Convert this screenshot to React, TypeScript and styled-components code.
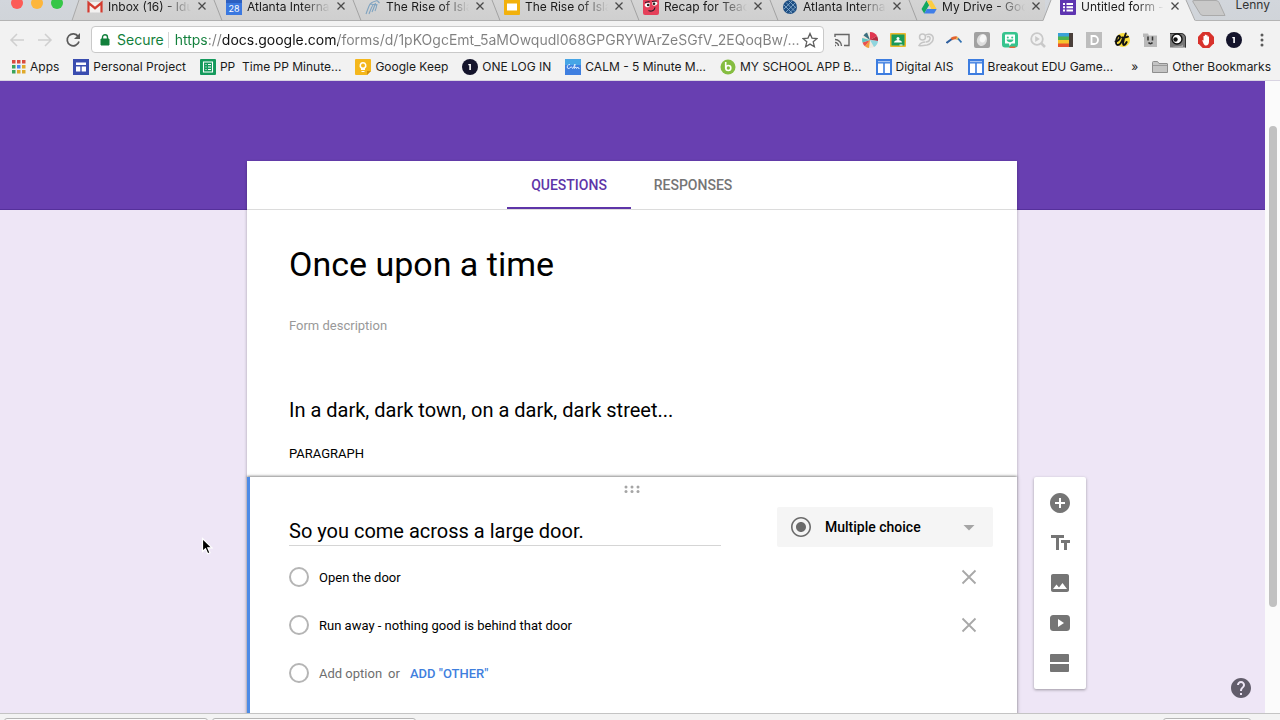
import React, { ReactNode } from "react";
import styled, { createGlobalStyle } from "styled-components";

const GlobalStyle = createGlobalStyle`
  *, *::before, *::after { box-sizing: border-box; }
  body { margin: 0; }
  button, input, select { font: inherit; color: inherit; border: 0; margin: 0; padding: 0; background: none; outline: none; }
  svg { display: block; flex: none; }
`;

const uiFont = `Inter, "Liberation Sans", sans-serif`;
const formFont = `Roboto, "Liberation Sans", sans-serif`;

const Window = styled.div`
  position: relative;
  display: flex;
  flex-direction: column;
  height: 100vh;
  overflow: hidden;
  background: #f2f2f2;
  font-family: ${uiFont};
  font-size: 12px;
  color: #1a1a1a;
`;

/* Tab strip */
const TabStrip = styled.header`
  display: flex;
  align-items: stretch;
  flex: none;
  height: 21px;
  overflow: hidden;
  background: linear-gradient(#d2d6dc, #d0d4d9);
  box-shadow: inset 0 -1px #b4b4b4;
`;
const Lights = styled.div`
  flex: none;
  width: 72px;
`;
const TabList = styled.nav`
  display: flex;
  flex: 0 1 1112px;
  min-width: 0;
`;
const TabItem = styled.div<{ $active?: boolean }>`
  display: flex;
  flex: 1 1 0;
  min-width: 0;
  background: ${(p) => (p.$active ? "none" : "linear-gradient(#d4d4d4, #cfcfcf 20px, #b0b0b0 20px)")};
`;
const TabBody = styled.div<{ $active?: boolean }>`
  display: flex;
  flex: 1;
  min-width: 0;
  padding: 0 3px;
  gap: 5px;
  background: ${(p) => (p.$active ? "#f2f2f2" : "none")};
`;
const TabTitle = styled.a`
  flex: 1;
  min-width: 0;
  overflow: hidden;
  white-space: nowrap;
  line-height: 14px;
  color: inherit;
  text-decoration: none;
  mask-image: linear-gradient(90deg, #000 calc(100% - 28px), transparent);
`;
const IconButton = styled.button<{ $size?: number }>`
  display: flex;
  align-items: center;
  justify-content: center;
  flex: none;
  width: ${(p) => p.$size ?? 16}px;
  height: ${(p) => p.$size ?? 16}px;
  cursor: pointer;
`;
const Profile = styled.button`
  align-self: flex-start;
  margin-left: auto;
  padding-right: 10px;
  line-height: 10px;
  font-size: 12px;
  color: #333;
`;

/* Address toolbar */
const Toolbar = styled.div`
  display: flex;
  align-items: center;
  flex: none;
  height: 32px;
  padding: 5px 10px 0 9px;
`;
const NavButtons = styled.div`
  display: flex;
  gap: 12px;
  margin-right: 10px;
`;
const Omnibox = styled.div`
  display: flex;
  align-items: center;
  flex: 1;
  min-width: 0;
  height: 27px;
  padding: 0 5px 0 8px;
  border: 1px solid #c9c9c9;
  border-radius: 4px;
  background: #fff;
  font-size: 14px;
`;
const Secure = styled.span`
  margin: 0 6px 0 7px;
  padding-right: 4px;
  border-right: 1px solid #d5d5d5;
  line-height: 16px;
  color: #12803c;
`;
const Address = styled.input`
  flex: 1;
  min-width: 0;
  height: 20px;
  text-overflow: ellipsis;
  color: #808080;
  background: linear-gradient(90deg, #12803c 34px, #808080 34px 47px, #111 47px 163px, #808080 163px);
  background-clip: text;
  -webkit-text-fill-color: transparent;
`;
const Extensions = styled.div`
  display: flex;
  gap: 12px;
  margin-left: 10px;
`;

/* Bookmarks */
const Bookmarks = styled.nav`
  display: flex;
  align-items: center;
  flex: none;
  height: 28px;
  padding: 0 9px 0 10px;
  gap: 14px;
  overflow: hidden;
  border-bottom: 1px solid #d9d4e2;
`;
const Bookmark = styled.a<{ $end?: boolean }>`
  display: flex;
  align-items: center;
  flex: none;
  gap: 4px;
  margin-left: ${(p) => (p.$end ? "auto" : "0")};
  line-height: 16px;
  white-space: pre;
  color: inherit;
  text-decoration: none;
`;

/* Page */
const Viewport = styled.div`
  position: relative;
  display: flex;
  flex: 1;
  min-height: 0;
  overflow: hidden;
`;
const Page = styled.main`
  display: grid;
  grid-template-columns: minmax(0, 1fr) minmax(0, 770px) minmax(52px, 1fr);
  flex: 1;
  align-items: start;
  min-width: 0;
  padding: 80px 1px 0 0;
  background: linear-gradient(#683fb1 128px, #55309a 128px 129px, #eee6f6 129px);
  font-family: ${formFont};
  font-size: 13px;
  color: #000;
`;
const ScrollTrack = styled.div`
  flex: none;
  width: 15px;
  padding: 45px 3px 0 4px;
  background: #fbfbfb;
`;
const ScrollThumb = styled.div`
  height: 82%;
  border-radius: 4px;
  background: #c1c1c1;
`;
const FormColumn = styled.div`
  grid-column: 2;
`;
const Sheet = styled.section`
  background: #fff;
  box-shadow: 0 1px 3px rgba(0, 0, 0, 0.3);
`;
const FormTabs = styled.div`
  display: flex;
  justify-content: center;
  height: 49px;
  padding-right: 2px;
  border-bottom: 1px solid #dcdcdc;
`;
const FormTab = styled.button<{ $active?: boolean }>`
  width: 124px;
  border-bottom: 2px solid ${(p) => (p.$active ? "#5e35a8" : "transparent")};
  padding-top: 2px;
  font-size: 14px;
  font-weight: 500;
  color: ${(p) => (p.$active ? "#5e35a8" : "#757575")};
`;
const Fields = styled.div`
  display: flex;
  flex-direction: column;
  padding: 34px 42px 15px;
`;
const TitleInput = styled.input`
  height: 40px;
  font-size: 34px;
  line-height: 40px;
`;
const DescriptionInput = styled.input`
  height: 16px;
  margin: 33px 0 65px;
  &::placeholder { color: #999; opacity: 1; }
`;
const QuestionInput = styled.input<{ $underline?: boolean }>`
  flex: ${(p) => (p.$underline ? "0 1 432px" : "none")};
  min-width: 0;
  height: ${(p) => (p.$underline ? "30px" : "24px")};
  margin-bottom: ${(p) => (p.$underline ? "1px" : "0")};
  border-bottom: ${(p) => (p.$underline ? "1px solid #d5d5d5" : "0")};
  font-size: 20px;
`;
const TypeLabel = styled.p`
  margin: 24px 0 0;
  line-height: 16px;
`;
const QuestionCard = styled.section`
  position: relative;
  min-height: 300px;
  padding: 0 24px 0 39px;
  border-left: 3px solid #4d8be6;
  background: #fff;
  box-shadow: 0 -1px 2px rgba(0, 0, 0, 0.3), 0 0 4px rgba(0, 0, 0, 0.3);
`;
const DragHandle = styled.div`
  display: flex;
  justify-content: center;
  height: 30px;
  padding: 8px 18px 0 0;
`;
const QuestionHead = styled.div`
  display: flex;
  justify-content: space-between;
  align-items: flex-end;
  height: 40px;
  margin-bottom: 6px;
`;
const TypeSelect = styled.label`
  display: flex;
  align-items: center;
  flex: 0 0 216px;
  height: 40px;
  padding: 0 12px;
  border-radius: 2px;
  background: #f5f5f5;
`;
const Select = styled.select`
  flex: 1;
  height: 40px;
  margin-left: 12px;
  appearance: none;
  font-size: 14px;
  font-weight: 500;
`;
const Option = styled.div`
  display: flex;
  align-items: center;
  height: 48px;
  padding-right: 12px;
`;
const Radio = styled.input`
  appearance: none;
  flex: none;
  width: 20px;
  height: 20px;
  margin-right: 10px;
  border: 2px solid #b5b5b5;
  border-radius: 50%;
`;
const OptionInput = styled.input`
  flex: 1;
  min-width: 0;
  height: 20px;
`;
const AddButton = styled.button<{ $accent?: boolean }>`
  margin-right: ${(p) => (p.$accent ? "0" : "6px")};
  margin-left: ${(p) => (p.$accent ? "10px" : "0")};
  font-weight: ${(p) => (p.$accent ? "500" : "400")};
  color: ${(p) => (p.$accent ? "#3f7fde" : "#6e6e6e")};
`;
const Or = styled.span`
  color: #6e6e6e;
`;
const SideTools = styled.aside`
  display: flex;
  flex-direction: column;
  gap: 16px;
  width: 52px;
  margin: 316px 0 0 17px;
  padding: 14px;
  border-radius: 2px;
  background: #fff;
  box-shadow: 0 1px 3px rgba(0, 0, 0, 0.35);
`;
const Help = styled.button`
  position: absolute;
  right: 27px;
  bottom: 13px;
`;
const Pointer = styled.svg`
  position: absolute;
  left: 201px;
  top: 537px;
`;
const Shelf = styled.footer`
  display: flex;
  flex: none;
  gap: 4px;
  height: 7px;
  padding: 4px 29px 0 4px;
  overflow: hidden;
  border-top: 1px solid #c4c4c4;
  background: #f3f3f3;
`;
const ShelfItem = styled.div<{ $end?: boolean }>`
  flex: 0 1 ${(p) => (p.$end ? "88px" : "204px")};
  height: 22px;
  margin-left: ${(p) => (p.$end ? "auto" : "0")};
  border: 1px solid #b5b5b5;
  border-radius: 3px;
  background: #fcfcfc;
`;

const Cross = ({ size, box, color, width }: { size: number; box: number; color: string; width: number }) => {
  const a = (box - size) / 2;
  const b = box - a;
  return (
    <svg width={box} height={box} viewBox={`0 0 ${box} ${box}`} stroke={color} strokeWidth={width}>
      <path d={`M${a} ${a}L${b} ${b}M${b} ${a}L${a} ${b}`} />
    </svg>
  );
};

const Icon16 = ({ children }: { children: ReactNode }) => (
  <svg width="16" height="16" viewBox="0 0 16 16" fill="none">{children}</svg>
);

const OneIcon = () => (
  <Icon16>
    <circle cx="8" cy="8" r="8" fill="#14142b" />
    <path d="M6.300 5h2.600v6H7.300V6.300h-1z" fill="#fff" />
  </Icon16>
);

const TabIcon = ({ children }: { children: ReactNode }) => (
  <svg width="16" height="15" viewBox="0 1 16 15" fill="none">{children}</svg>
);

const tabs: { title: string; icon: ReactNode }[] = [
  {
    title: "Inbox (16) - Idu",
    icon: (
      <TabIcon>
        <path d="M1 3h14v10.500H1z" fill="#f3f1f0" />
        <path d="M1.500 13.500V3.800L8 9.200l6.500-5.400v9.700" stroke="#d33b2f" strokeWidth="2.200" />
      </TabIcon>
    ),
  },
  {
    title: "Atlanta Interna",
    icon: (
      <TabIcon>
        <path d="M0 0h16v16H0z" fill="#3b78e0" />
        <path d="M0 0h16v4H0z" fill="#2c5fc0" />
        <text x="8" y="12.500" fontSize="9" fontFamily="Inter" fill="#fff" textAnchor="middle">28</text>
      </TabIcon>
    ),
  },
  {
    title: "The Rise of Isla",
    icon: (
      <TabIcon>
        <path d="M1 15C2.500 11 3.500 8 4.500 6c1-3 4-3.500 8-4.500M4 15c1.500-4 2.500-7 4-9M7 13c1.500-3 2.500-6 3.500-9M10 12c1-2 1.500-4 2-7M5 5l7 1M12.500 2l2 2" stroke="#7fa3c0" strokeWidth="1.100" />
      </TabIcon>
    ),
  },
  {
    title: "The Rise of Isla",
    icon: (
      <TabIcon>
        <rect width="16" height="16" rx="1" fill="#f2b10c" />
        <path d="M3 4.500h10v7H3z" fill="#fff" />
      </TabIcon>
    ),
  },
  {
    title: "Recap for Teac",
    icon: (
      <TabIcon>
        <rect width="16" height="16" rx="2" fill="#e5405a" />
        <path d="M1.500 6c1.500-2.500 4-3 5.500-1.500L6.500 7.500c-1.500 1.500-4 1-5-1.500zM9 4c1.500-2 4-2 5.500 0-.5 2.500-3.500 3.500-5 2z" fill="#fff" />
        <path d="M2 3.500l4.500-1M9 2.500L13.500 2M5.500 11.500c3 1.500 6 0 6.500-3" stroke="#2b1d2b" strokeWidth="1.200" />
        <circle cx="5.200" cy="6" r="1.300" fill="#222" />
        <circle cx="11" cy="4.800" r="1.300" fill="#222" />
      </TabIcon>
    ),
  },
  {
    title: "Atlanta Interna",
    icon: (
      <TabIcon>
        <circle cx="8" cy="8" r="7" fill="#1d4e83" />
        <path d="M2 6l8 8M4 3.500l9 9M7 2l7 7M2 10l8-8M4 13l9-9M7 14.500l7-7" stroke="#8bb0d0" strokeWidth="0.800" />
      </TabIcon>
    ),
  },
  {
    title: "My Drive - Goo",
    icon: (
      <TabIcon>
        <path d="M5.500 1.500L0.500 10l2.700 4.500L8.200 6z" fill="#11a861" />
        <path d="M5.500 1.500h5.200L15.700 10h-5.300z" fill="#fccd42" />
        <path d="M3.200 14.500L5.900 10h9.800l-2.600 4.500z" fill="#3f7ee8" />
      </TabIcon>
    ),
  },
  {
    title: "Untitled form -",
    icon: (
      <TabIcon>
        <rect width="16" height="16" rx="1" fill="#5e35b1" />
        <path d="M3 4h2v2H3zM6.500 4H13v2H6.500zM3 7.300h2v2H3zM6.500 7.300H13v2H6.500zM3 10.600h2v2H3zM6.500 10.600H13v2H6.500z" fill="#fff" />
      </TabIcon>
    ),
  },
];

const TabEdge = ({ kind }: { kind: "first" | "between" | "active" }) => (
  <svg width="12" height="21" viewBox="0 0 12 21" fill="none" overflow="visible" strokeWidth="1">
    {kind === "first" && (
      <>
        <path d="M0 0h7L0 20z" fill="#d2d6db" />
        <path d="M7 0L0 20.500" stroke="#a9a9a9" />
      </>
    )}
    {kind === "between" && <path d="M3 0l8 20.500" stroke="#a2a2a2" />}
    {kind === "active" && (
      <>
        <path d="M6 0h6.500v21H-2z" fill="#f2f2f2" />
        <path d="M6 0l-8 20.500" stroke="#a9a9a9" />
      </>
    )}
  </svg>
);

const EtIcon = () => (
  <Icon16>
    <circle cx="9" cy="8" r="7" fill="#f8dc3c" />
    <path d="M1.500 9.500c3-.5 5-3 4.500-5C5.500 3 3.500 4 2.500 7c-1 3.500-.5 6 1.200 6 2 0 4-3 4.800-5.500M11.800 1.500C10 6 8 13 9.700 13c1.300 0 2.300-1.500 3-3M8 5.500c2 .3 4 0 6-.8" stroke="#111" strokeWidth="1.900" strokeLinecap="round" />
  </Icon16>
);

const extensions: { name: string; icon: ReactNode }[] = [
  {
    name: "Cast",
    icon: (
      <Icon16>
        <path d="M1 5V2.500h14v11h-5M1 13.500h1M1 10.500a3.500 3.500 0 0 1 3.500 3.500M1 7.500A6.500 6.500 0 0 1 7.500 14" stroke="#666" strokeWidth="1.400" />
      </Icon16>
    ),
  },
  {
    name: "Color wheel",
    icon: (
      <Icon16>
        <circle cx="8" cy="8" r="8" fill="#efe8df" />
        <path d="M8 8V0a8 8 0 0 1 7 4z" fill="#e0354f" />
        <path d="M8 8l7-4a8 8 0 0 1 1 5z" fill="#b52a40" />
        <path d="M8 8l8 1a8 8 0 0 1-4 6z" fill="#8fd5de" />
        <path d="M8 8l-1 8a8 8 0 0 1-4-1.800z" fill="#f2a03c" />
        <path d="M8 8l-5 6.200A8 8 0 0 1 .5 10.500z" fill="#e8524f" />
        <path d="M8 8L.5 10.500A8 8 0 0 1 .3 6z" fill="#5fc4c1" />
        <path d="M8 8L1.500 3.500A8 8 0 0 1 5 .6z" fill="#3a6f80" />
      </Icon16>
    ),
  },
  {
    name: "Classroom",
    icon: (
      <Icon16>
        <rect y="1" width="16" height="14" rx="1" fill="#e9b92c" />
        <path d="M1.500 2.500h13v11h-13z" fill="#199a5a" />
        <circle cx="8" cy="6.500" r="1.500" fill="#fff" />
        <path d="M4 10.500c0-3.500 8-3.500 8 0zM9.500 12.500h3v1h-3z" fill="#fff" />
      </Icon16>
    ),
  },
  {
    name: "Sketch",
    icon: (
      <Icon16>
        <circle cx="4.500" cy="5" r="3" stroke="#c6c6c6" strokeWidth="1.500" />
        <path d="M7 3.500c2-2 7-2 8 1.500s-2 7-6 8c-3 .5-6 1-8 .5 1-2 4-3.500 6.500-3.500M9 5c2-1 3.500 0 3 2s-2.500 3-4 3" stroke="#c6c6c6" strokeWidth="1.500" />
      </Icon16>
    ),
  },
  {
    name: "Boomerang",
    icon: (
      <Icon16>
        <path d="M.5 11C2.500 9.500 4.500 8 6.500 6.500" stroke="#2f5f9e" strokeWidth="2" />
        <path d="M5.500 7.200C7 6 8.500 5.500 11 6" stroke="#e2632d" strokeWidth="3" />
        <path d="M10.500 5.800l2 1.200" stroke="#e9c05a" strokeWidth="2.600" />
        <path d="M12 6.500l3.500 4" stroke="#2f6fb0" strokeWidth="1.800" />
      </Icon16>
    ),
  },
  {
    name: "Egg",
    icon: (
      <Icon16>
        <rect width="16" height="16" rx="2" fill="#a1a1a1" />
        <ellipse cx="8" cy="8" rx="5" ry="6" fill="#dedede" transform="rotate(20 8 8)" />
        <ellipse cx="9" cy="6.500" rx="3" ry="4" fill="#f7f7f7" transform="rotate(20 9 6)" />
      </Icon16>
    ),
  },
  {
    name: "Bitmoji",
    icon: (
      <Icon16>
        <rect width="16" height="15.500" rx="3" fill="#36c48e" />
        <path d="M8 14.500h6.500l-2 1.500H7z" fill="#e8663a" />
        <path d="M3.500 2.500h9q.5 0 .5.500v8q0 .5-.5.500H9.500l-2 2.500-.5-2.500H3.500q-.5 0-.5-.5V3q0-.5.500-.5z" fill="#fff" />
        <circle cx="5.800" cy="5.500" r="1" fill="#36c48e" />
        <circle cx="10.200" cy="5.500" r="1" fill="#36c48e" />
        <path d="M4.500 7.500h7c-.5 3.500-6.500 3.500-7 0z" fill="#36c48e" />
      </Icon16>
    ),
  },
  {
    name: "Search",
    icon: (
      <Icon16>
        <circle cx="7" cy="7" r="5.800" stroke="#c9c9c9" strokeWidth="1.800" />
        <path d="M5.200 4l4.600 3-4.600 3z" fill="#c9c9c9" />
        <path d="M11 11l4 4" stroke="#c9c9c9" strokeWidth="2.500" />
      </Icon16>
    ),
  },
  {
    name: "Color stack",
    icon: (
      <Icon16>
        <path d="M0 1h12v4H0z" fill="#3aa2d8" />
        <path d="M0 4.500h12v4H0z" fill="#4db34f" />
        <path d="M0 8h12v4H0z" fill="#f5c42c" />
        <path d="M0 11.500h12V15H0z" fill="#e8542e" />
        <path d="M11 1h4v14h-4z" fill="#4a3f3a" />
      </Icon16>
    ),
  },
  {
    name: "Docs",
    icon: (
      <Icon16>
        <path d="M0 0h16v16H0z" fill="#bdbdbd" />
        <path d="M5.500 4H8a4 4 0 0 1 0 8H5.500z" stroke="#fff" strokeWidth="1.800" />
      </Icon16>
    ),
  },
  { name: "Type", icon: <EtIcon /> },
  {
    name: "Folder face",
    icon: (
      <Icon16>
        <path d="M1 1.500h5l1 2h8V15H2V5H1z" fill="#b9b9b9" />
        <path d="M6 4.500v4M10.500 4.500v4M6.500 10.500c1 1.500 3 1.500 4 0" stroke="#333" strokeWidth="1.500" />
      </Icon16>
    ),
  },
  {
    name: "Eye",
    icon: (
      <Icon16>
        <path d="M0 1h11a5 5 0 0 1 5 5v9.500H0z" fill="#777" />
        <path d="M0 1.500h11a4.500 4.500 0 0 1 4.500 4.500v9.500" stroke="#333" />
        <circle cx="7" cy="7" r="5" fill="#fff" stroke="#111" strokeWidth="1.400" />
        <circle cx="5.500" cy="7.500" r="2.200" fill="#111" />
        <path d="M2 15.500c2-2.500 8 0 11-3v3z" fill="#a5a5a5" />
      </Icon16>
    ),
  },
  {
    name: "AdBlock",
    icon: (
      <Icon16>
        <path d="M4.700 0h6.600L16 4.700v6.600L11.300 16H4.700L0 11.300V4.700z" fill="#d8322c" />
        <path d="M4.200 8l1.300.5V4h1.300v3.500V2.800h1.400v4.700V3.300h1.300V8V4.600H11v5.200C11 12 9.800 13.500 8 13.500S5.500 12 4.200 8z" fill="#fff" />
      </Icon16>
    ),
  },
  { name: "OneLogin", icon: <OneIcon /> },
  {
    name: "Menu",
    icon: (
      <Icon16>
        <circle cx="8" cy="3" r="1.500" fill="#5a5a5a" />
        <circle cx="8" cy="8" r="1.500" fill="#5a5a5a" />
        <circle cx="8" cy="13" r="1.500" fill="#5a5a5a" />
      </Icon16>
    ),
  },
];

const SiteIcon = () => (
  <Icon16>
    <path d="M0 0h16v16H0z" fill="#3d7de0" />
    <path d="M2 4.500h5.200V14H2zM8.800 4.500H14V14H8.800z" fill="#fff" />
    <path d="M2 2h12v1.200H2z" fill="#a9c6f4" />
  </Icon16>
);

const dotColors = ["#d94b3f", "#d94b3f", "#d94b3f", "#3ba45c", "#4285f4", "#e0a92b", "#3ba45c", "#e0a92b", "#e0a92b"];

const bookmarks: { title: string; icon: ReactNode }[] = [
  {
    title: "Apps",
    icon: (
      <Icon16>
        {dotColors.map((c, i) => (
          <rect key={i} x={2 + (i % 3) * 5} y={1 + Math.floor(i / 3) * 5} width="3.500" height="3.500" fill={c} />
        ))}
      </Icon16>
    ),
  },
  {
    title: "Personal Project",
    icon: (
      <Icon16>
        <path d="M0 0h16v16H0z" fill="#3a4db0" />
        <path d="M3 3.500h10V6H3zM3 7.500h4.300v5H3zM8.700 7.500H13v5H8.700z" fill="#fff" />
      </Icon16>
    ),
  },
  {
    title: "PP  Time PP Minute...",
    icon: (
      <Icon16>
        <rect width="16" height="16" rx="1" fill="#149a5c" />
        <path d="M3.500 3h9v10h-9zM5.500 5.500h1M8 5.500h3M5.500 8h1M8 8h3M5.500 10.500h1M8 10.500h3" stroke="#fff" strokeWidth="1.100" />
      </Icon16>
    ),
  },
  {
    title: "Google Keep",
    icon: (
      <Icon16>
        <path d="M1 0h14a1 1 0 0 1 1 1v11l-4 4H1a1 1 0 0 1-1-1V1a1 1 0 0 1 1-1z" fill="#f4b71c" />
        <path d="M12 16v-4h4z" fill="#d08d0c" />
        <path d="M8 3a3.500 3.500 0 0 0-2 6.400V11h4V9.400A3.500 3.500 0 0 0 8 3zM6.500 12h3v1h-3z" fill="#fff" />
        <circle cx="8" cy="6.500" r="2" fill="#f4b71c" />
      </Icon16>
    ),
  },
  { title: "ONE LOG IN", icon: <OneIcon /> },
  {
    title: "CALM - 5 Minute M...",
    icon: (
      <Icon16>
        <path d="M0 0h16v16H0z" fill="#3f7fe0" />
        <path d="M0 0h16v6H0z" fill="#46a5e6" />
        <path d="M5 5.500C2 5 1 10 4 9.500l2-1.500c1-1 1 2 2 1.500L10 5 9.500 9.500 11 8l.5 1.500L13 8l.5 1.500h1" stroke="#e5f1ff" strokeWidth="0.900" />
      </Icon16>
    ),
  },
  {
    title: "MY SCHOOL APP B...",
    icon: (
      <Icon16>
        <circle cx="8" cy="8" r="7.500" fill="#85bd41" />
        <circle cx="8.300" cy="9" r="2.500" stroke="#fff" strokeWidth="1.600" />
        <path d="M5.700 3v6.500" stroke="#fff" strokeWidth="1.600" />
      </Icon16>
    ),
  },
  { title: "Digital AIS", icon: <SiteIcon /> },
  { title: "Breakout EDU Game...", icon: <SiteIcon /> },
];

const Glyph = ({ d, color = "#757575" }: { d: string; color?: string }) => (
  <svg width="24" height="24" viewBox="0 0 24 24" fill={color}>
    <path d={d} />
  </svg>
);

const sideTools = [
  { name: "Add question", d: "M12 2C6.480 2 2 6.480 2 12s4.480 10 10 10 10-4.480 10-10S17.520 2 12 2zm5 11h-4v4h-2v-4H7v-2h4V7h2v4h4v2z" },
  { name: "Add title and description", d: "M3 4v3h5v12h3V7h5V4H3zm19 5h-9v3h3v7h3v-7h3V9z" },
  { name: "Add image", d: "M21 19V5c0-1.100-.9-2-2-2H5c-1.100 0-2 .9-2 2v14c0 1.100.9 2 2 2h14c1.100 0 2-.9 2-2zM5 18l3.500-4.500 2.500 3 3.500-4.500L19 18H5z" },
  { name: "Add video", d: "M6 4h12c3 0 4 1 4 4v8c0 3-1 4-4 4H6c-3 0-4-1-4-4V8c0-3 1-4 4-4zm4 4v8l6-4z" },
  { name: "Add section", d: "M3 3h17a1 1 0 0 1 1 1v7H2V4a1 1 0 0 1 1-1zM2 13h19v7a1 1 0 0 1-1 1H3a1 1 0 0 1-1-1z" },
];

const options = ["Open the door", "Run away - nothing good is behind that door"];

export default function App() {
  return (
    <Window>
      <GlobalStyle />
      <TabStrip>
        <Lights>
          <svg width="72" height="12" viewBox="0 0 72 12">
            <circle cx="17" cy="3" r="6" fill="#fc5b57" />
            <circle cx="37" cy="3" r="6" fill="#fdb63c" />
            <circle cx="57" cy="3" r="6" fill="#35c648" />
          </svg>
        </Lights>
        <TabList aria-label="Open tabs">
          {tabs.map((tab, i) => {
            const active = i === tabs.length - 1;
            return (
              <TabItem key={i} $active={active}>
                <TabEdge kind={active ? "active" : i === 0 ? "first" : "between"} />
                <TabBody $active={active}>
                  {tab.icon}
                  <TabTitle href="#">{tab.title}</TabTitle>
                  <IconButton $size={12} aria-label="Close tab">
                    <Cross size={7} box={12} color="#4a4a4a" width={1.300} />
                  </IconButton>
                </TabBody>
              </TabItem>
            );
          })}
        </TabList>
        <svg width="42" height="21" viewBox="0 0 42 21" role="img" aria-label="New tab">
          <path d="M-1 0h3l9.500 21H-1z" fill="#f2f2f2" />
          <path d="M2 0l9 20.500" stroke="#a9a9a9" fill="none" />
          <path d="M10 .5h22q2 0 3 2l6 13H19q-2 0-3-2L9 2q-1-1.500 1-1.500z" fill="#c9c9c9" stroke="#aaa" />
        </svg>
        <Profile>Lenny</Profile>
      </TabStrip>

      <Toolbar>
        <NavButtons>
          <IconButton aria-label="Back">
            <Icon16><path d="M15 8H2M8 2L2 8l6 6" stroke="#cfcfcf" strokeWidth="1.500" /></Icon16>
          </IconButton>
          <IconButton aria-label="Forward">
            <Icon16><path d="M1 8h13M8 2l6 6-6 6" stroke="#cfcfcf" strokeWidth="1.500" /></Icon16>
          </IconButton>
          <IconButton aria-label="Reload">
            <Icon16>
              <path d="M13.200 4.500A6 6 0 1 0 14 9.500" stroke="#5a5a5a" strokeWidth="1.700" />
              <path d="M15 1v6H9z" fill="#5a5a5a" />
            </Icon16>
          </IconButton>
        </NavButtons>
        <Omnibox>
          <svg width="10" height="12" viewBox="0 0 10 12">
            <path d="M1 5h8v6H1z" fill="#12803c" stroke="#12803c" />
            <path d="M2.500 5V3.200a2.500 2.500 0 0 1 5 0V5" fill="none" stroke="#12803c" strokeWidth="1.400" />
          </svg>
          <Secure>Secure</Secure>
          <Address
            aria-label="Address"
            readOnly
            value="https://docs.google.com/forms/d/1pKOgcEmt_5aMOwqudl068GPGRYWArZeSGfV_2EQoqBw/..."
          />
          <IconButton aria-label="Bookmark this page">
            <Icon16>
              <path d="M8 1.500l2 4.600 5 .4-3.800 3.300 1.200 4.900L8 12.100l-4.400 2.600 1.200-4.900L1 6.500l5-.4z" stroke="#5f5f5f" strokeWidth="1.300" />
            </Icon16>
          </IconButton>
        </Omnibox>
        <Extensions>
          {extensions.map((e) => (
            <IconButton key={e.name} aria-label={e.name}>{e.icon}</IconButton>
          ))}
        </Extensions>
      </Toolbar>

      <Bookmarks aria-label="Bookmarks">
        {bookmarks.map((b) => (
          <Bookmark key={b.title} href="#">{b.icon}{b.title}</Bookmark>
        ))}
        <Bookmark href="#" $end>»</Bookmark>
        <Bookmark href="#">
          <Icon16>
            <path d="M.5 13.500v-10q0-1 1-1h4l1.500 2h8q.5 0 .5.500v8.500z" fill="#c4c4c4" stroke="#8e8e8e" />
            <path d="M1 6.500h14" stroke="#9a9a9a" />
          </Icon16>
          Other Bookmarks
        </Bookmark>
      </Bookmarks>

      <Viewport>
        <Page>
          <FormColumn>
            <Sheet>
              <FormTabs>
                <FormTab $active>QUESTIONS</FormTab>
                <FormTab>RESPONSES</FormTab>
              </FormTabs>
              <Fields>
                <TitleInput aria-label="Form title" defaultValue="Once upon a time" />
                <DescriptionInput aria-label="Form description" placeholder="Form description" />
                <QuestionInput aria-label="Question 1" defaultValue="In a dark, dark town, on a dark, dark street..." />
                <TypeLabel>PARAGRAPH</TypeLabel>
              </Fields>
            </Sheet>
            <QuestionCard>
              <DragHandle>
                <svg width="16" height="8" viewBox="0 0 16 8" fill="#a5a5a5">
                  {[2, 8, 14].map((x) => (
                    <g key={x}>
                      <circle cx={x} cy="2" r="1.500" />
                      <circle cx={x} cy="6.500" r="1.500" />
                    </g>
                  ))}
                </svg>
              </DragHandle>
              <QuestionHead>
                <QuestionInput $underline aria-label="Question 2" defaultValue="So you come across a large door." />
                <TypeSelect>
                  <Glyph color="#6b6b6b" d="M12 7c-2.760 0-5 2.240-5 5s2.240 5 5 5 5-2.240 5-5-2.240-5-5-5zm0-5C6.480 2 2 6.480 2 12s4.480 10 10 10 10-4.480 10-10S17.520 2 12 2zm0 18.400c-4.640 0-8.400-3.760-8.400-8.400S7.360 3.600 12 3.600s8.400 3.760 8.400 8.400-3.760 8.400-8.400 8.400z" />
                  <Select aria-label="Question type" defaultValue="mc">
                    <option value="mc">Multiple choice</option>
                  </Select>
                  <Glyph color="#a5a5a5" d="M6.500 10l5.500 5.500L17.500 10z" />
                </TypeSelect>
              </QuestionHead>
              {options.map((o) => (
                <Option key={o}>
                  <Radio type="radio" name="answer" aria-label={o} />
                  <OptionInput aria-label="Option text" defaultValue={o} />
                  <IconButton $size={24} aria-label="Remove option">
                    <Cross size={13} box={24} color="#a8a8a8" width={1.800} />
                  </IconButton>
                </Option>
              ))}
              <Option>
                <Radio type="radio" name="answer" aria-label="New option" />
                <AddButton>Add option</AddButton>
                <Or>or</Or>
                <AddButton $accent>ADD "OTHER"</AddButton>
              </Option>
            </QuestionCard>
          </FormColumn>
          <SideTools>
            {sideTools.map((t) => (
              <IconButton key={t.name} $size={24} aria-label={t.name}>
                <Glyph d={t.d} />
              </IconButton>
            ))}
          </SideTools>
        </Page>
        <ScrollTrack>
          <ScrollThumb />
        </ScrollTrack>
        <Help aria-label="Help">
          <Glyph color="#625d6b" d="M12 2C6.480 2 2 6.480 2 12s4.480 10 10 10 10-4.480 10-10S17.520 2 12 2zm1 17h-2v-2h2v2zm2.070-7.750l-.9.920C13.450 12.900 13 13.500 13 15h-2v-.5c0-1.100.450-2.100 1.170-2.830l1.240-1.260c.370-.360.590-.860.590-1.410 0-1.100-.9-2-2-2s-2 .9-2 2H8c0-2.210 1.790-4 4-4s4 1.790 4 4c0 .880-.360 1.680-.930 2.250z" />
        </Help>
      </Viewport>

      <Shelf>
        <ShelfItem />
        <ShelfItem />
        <ShelfItem $end />
      </Shelf>

      <Pointer width="14" height="20" viewBox="0 0 14 20">
        <path d="M1.500 1.500v13l3-2.800 2.200 5 2.300-1-2.200-4.900h4.200z" fill="#000" stroke="#fff" strokeWidth="1.200" />
      </Pointer>
    </Window>
  );
}
